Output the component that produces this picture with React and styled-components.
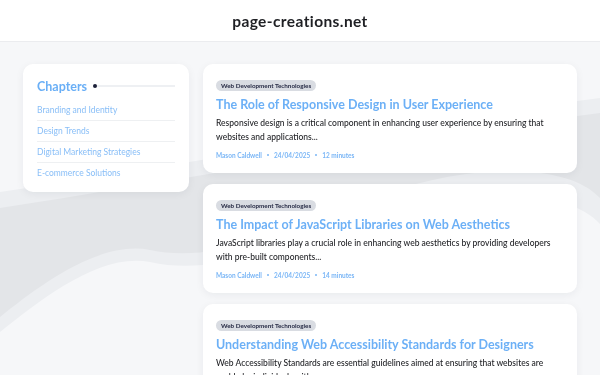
import React from "react";
import styled, { createGlobalStyle } from "styled-components";

const GlobalStyle = createGlobalStyle`
  html, body { margin: 0; padding: 0; }
  body {
    background: #f6f7f9;
    font-family: Lato, "Noto Sans", sans-serif;
    overflow: hidden;
  }
`;

const Backdrop = styled.svg`
  position: fixed;
  inset: 0;
  width: 600px;
  height: 375px;
  z-index: 0;
`;

const Page = styled.div`
  position: relative;
  z-index: 1;
  width: 600px;
  height: 375px;
  overflow: hidden;
`;

const Header = styled.header`
  height: 41px;
  background: #ffffff;
  border-bottom: 1px solid #ebecef;
  display: flex;
  align-items: center;
  justify-content: center;
`;

const SiteName = styled.h1`
  margin: 0;
  font-size: 15.5px;
  font-weight: 700;
  color: #1f2024;
  letter-spacing: 0.4px;
`;

const Layout = styled.main`
  display: grid;
  grid-template-columns: 166px 374px;
  gap: 14px;
  padding: 22px 23px 0;
  align-items: start;
`;

const Sidebar = styled.aside`
  background: #ffffff;
  border-radius: 10px;
  padding: 14px 14px 9px;
  box-shadow: 0 2px 8px rgba(20, 30, 50, 0.06);
`;

const SidebarHead = styled.div`
  display: flex;
  align-items: center;
  height: 16px;
  margin-bottom: 6px;
`;

const SidebarTitle = styled.h2`
  margin: 0;
  font-size: 12.5px;
  font-weight: 700;
  color: #6aaff6;
`;

const Dot = styled.span`
  width: 4px;
  height: 4px;
  border-radius: 50%;
  background: #1c2138;
  margin-left: 6px;
  flex: none;
`;

const Rule = styled.span`
  flex: 1;
  height: 2px;
  background: #eef0f3;
`;

const ChapterList = styled.ul`
  list-style: none;
  margin: 0;
  padding: 0;
`;

const Chapter = styled.li`
  font-size: 8.5px;
  line-height: 10px;
  padding: 5px 0;
  color: #88bef7;
  border-top: ${(p) => (p.$first ? "none" : "1px solid #eef0f2")};
`;

const Feed = styled.section`
  display: flex;
  flex-direction: column;
  gap: 11px;
`;

const Card = styled.article`
  background: #ffffff;
  border-radius: 10px;
  padding: 16px 13px 13px;
  box-shadow: 0 2px 8px rgba(20, 30, 50, 0.06);
`;

const Tag = styled.div`
  display: flex;
  align-items: center;
  width: fit-content;
  height: 11px;
  padding: 0 5px;
  border-radius: 6px;
  background: #d9dce2;
  color: #262a44;
  font-size: 6.3px;
  line-height: 11px;
  font-weight: 700;
`;

const Title = styled.h3`
  margin: 6px 0 0;
  font-size: 12.5px;
  line-height: 16px;
  font-weight: 700;
  color: #6cb0f6;
`;

const Excerpt = styled.p`
  margin: 3px 0 0;
  font-size: 8.5px;
  line-height: 14px;
  font-weight: 500;
  color: #232428;
`;

const Meta = styled.div`
  margin-top: 6px;
  height: 10px;
  display: flex;
  align-items: center;
  gap: 4px;
  font-size: 6.5px;
  font-weight: 700;
  color: #7ab6f6;
`;

const Sep = styled.span`
  width: 2px;
  height: 2px;
  background: #7ab6f6;
  border-radius: 50%;
  margin: 0 1px;
`;

const chapters = [
  "Branding and Identity",
  "Design Trends",
  "Digital Marketing Strategies",
  "E-commerce Solutions",
];

const posts = [
  {
    title: "The Role of Responsive Design in User Experience",
    excerpt:
      "Responsive design is a critical component in enhancing user experience by ensuring that websites and applications...",
    time: "12 minutes",
  },
  {
    title: "The Impact of JavaScript Libraries on Web Aesthetics",
    excerpt:
      "JavaScript libraries play a crucial role in enhancing web aesthetics by providing developers with pre-built components...",
    time: "14 minutes",
  },
  {
    title: "Understanding Web Accessibility Standards for Designers",
    excerpt:
      "Web Accessibility Standards are essential guidelines aimed at ensuring that websites are usable by individuals with...",
    time: "10 minutes",
  },
];

export default function App() {
  return (
    <>
      <GlobalStyle />
      <Backdrop viewBox="0 0 600 375" preserveAspectRatio="none">
        <path
          d="M0,192 C180,165 400,125 600,98 L600,224 C570,190 480,185 380,215 C300,240 220,278 150,262 C100,252 40,300 0,332 Z"
          fill="#eceef1"
        />
        <path
          d="M0,208 C180,180 400,140 600,113 L600,198 C570,165 480,160 380,195 C300,225 220,265 150,250 C100,240 40,285 0,317 Z"
          fill="#e3e5e8"
        />
      </Backdrop>
      <Page>
        <Header>
          <SiteName>page-creations.net</SiteName>
        </Header>
        <Layout>
          <Sidebar>
            <SidebarHead>
              <SidebarTitle>Chapters</SidebarTitle>
              <Dot />
              <Rule />
            </SidebarHead>
            <ChapterList>
              {chapters.map((c, i) => (
                <Chapter key={c} $first={i === 0}>
                  {c}
                </Chapter>
              ))}
            </ChapterList>
          </Sidebar>
          <Feed>
            {posts.map((p) => (
              <Card key={p.title}>
                <Tag>Web Development Technologies</Tag>
                <Title>{p.title}</Title>
                <Excerpt>{p.excerpt}</Excerpt>
                <Meta>
                  <span>Mason Caldwell</span>
                  <Sep />
                  <span>24/04/2025</span>
                  <Sep />
                  <span>{p.time}</span>
                </Meta>
              </Card>
            ))}
          </Feed>
        </Layout>
      </Page>
    </>
  );
}
